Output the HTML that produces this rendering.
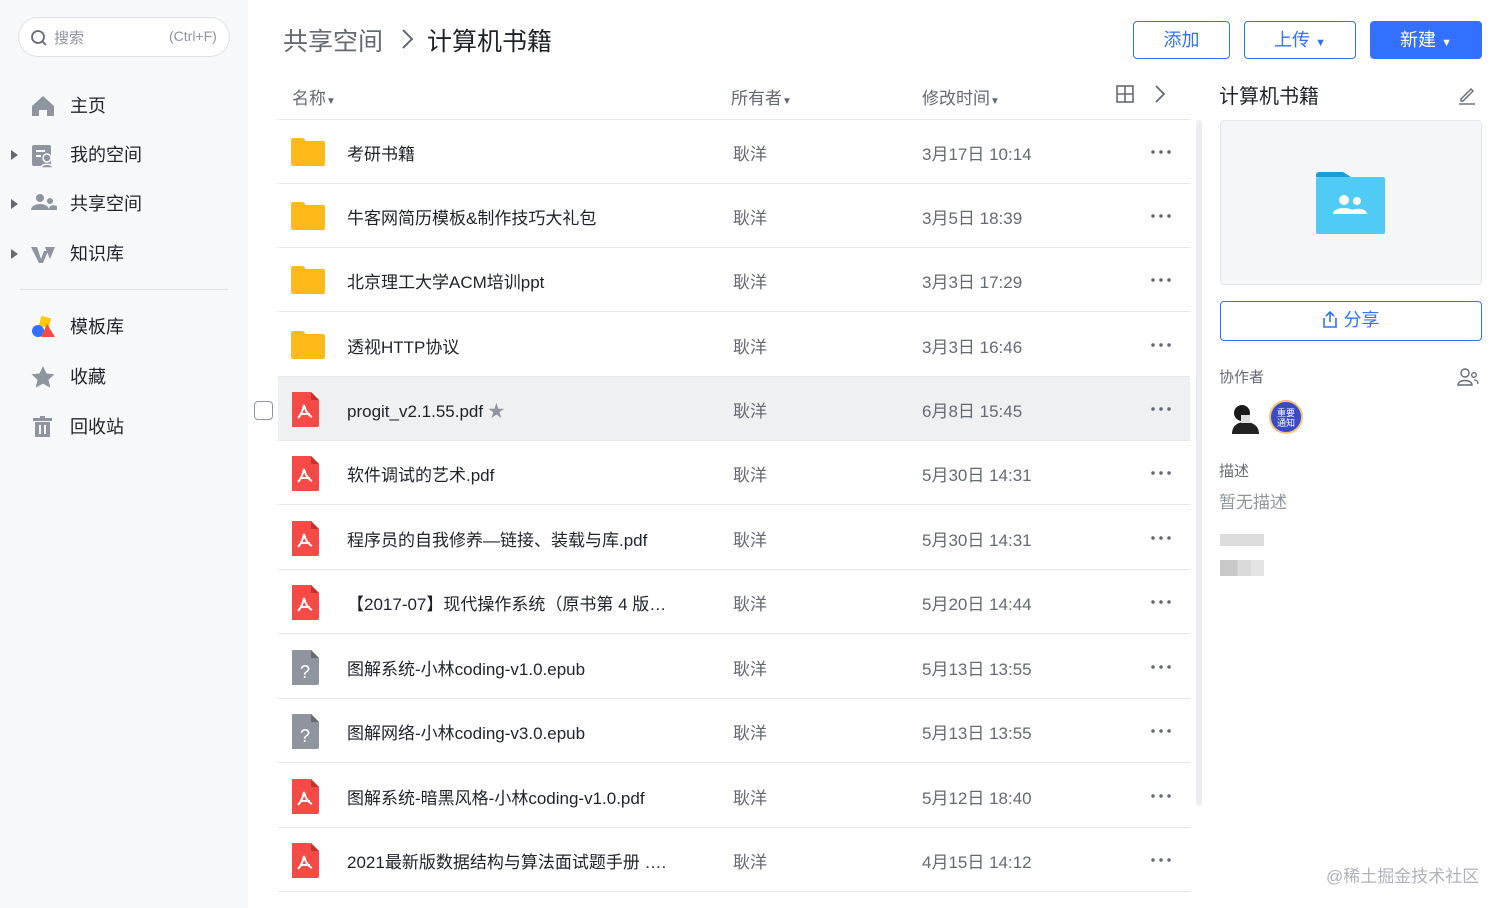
<!DOCTYPE html>
<html><head><meta charset="utf-8"><style>
*{margin:0;padding:0;box-sizing:border-box}
body{width:1512px;height:908px;overflow:hidden;background:#fff;font-family:"Liberation Sans","Noto Sans CJK SC",sans-serif;color:#1f2329;position:relative}
.abs{position:absolute}
.side{left:0;top:0;width:248px;height:908px;background:#f7f8fa}
.search{left:18px;top:17px;width:212px;height:40px;border:1px solid #dee0e3;border-radius:20px;background:#fff;font-size:15px;color:#8f959e}
.nav{left:0;width:248px;height:30px;font-size:18px;color:#1f2329;line-height:30px}
.nav .t{position:absolute;left:70px}
.nav .ar{position:absolute;left:11px;top:10px;width:0;height:0;border-left:7px solid #646a73;border-top:5px solid transparent;border-bottom:5px solid transparent}
.ic{position:absolute;left:31px;top:4px}
.row{left:278px;width:912px;height:64px;border-bottom:1px solid #e5e6eb;font-size:17px;color:#1f2329}
.row .n{position:absolute;left:69px;top:20px;white-space:nowrap}
.row .o{position:absolute;left:455px;top:20px;color:#646a73}
.row .d{position:absolute;left:644px;top:20px;color:#646a73}
.row .m{position:absolute;left:871px;top:30px;width:22px;height:4px;background:radial-gradient(circle,#646a73 1.6px,transparent 2px) 0 0/8px 4px repeat-x}
.row .fi{position:absolute;left:13px;top:18px}
.hd{font-size:17px;color:#646a73;top:84px}
.btn{height:38px;top:21px;border:1px solid #3370ff;border-radius:4px;color:#3370ff;font-size:18px;text-align:center;line-height:36px}
</style></head><body>
<div class="abs side"></div>
<div class="abs search"><svg class="abs" style="left:11px;top:11px" width="18" height="18" viewBox="0 0 18 18"><circle cx="8" cy="8" r="6" fill="none" stroke="#646a73" stroke-width="1.8"/><path d="M12.5 12.5L16 16" stroke="#646a73" stroke-width="1.8"/></svg><span class="abs" style="left:35px;top:9px">搜索</span><span class="abs" style="left:150px;top:10px;font-size:14px">(Ctrl+F)</span></div>

<div class="abs nav" style="top:91px"><svg class="ic" width="24" height="22" viewBox="0 0 24 22"><path d="M12 1L1 11v10h7v-6h8v6h7V11z" fill="#8f959e"/></svg><span class="t">主页</span></div>
<div class="abs nav" style="top:140px"><span class="ar"></span><svg class="ic" width="24" height="24" viewBox="0 0 24 24"><rect x="1" y="1" width="19" height="21" rx="2" fill="#8f959e"/><path d="M5 7h9M5 12h5" stroke="#fff" stroke-width="2"/><circle cx="16" cy="14" r="4" fill="#8f959e" stroke="#f7f8fa" stroke-width="1.5"/><path d="M10 24c0-5 12-5 12 0z" fill="#8f959e" stroke="#f7f8fa" stroke-width="1.5"/></svg><span class="t">我的空间</span></div>
<div class="abs nav" style="top:189px"><span class="ar"></span><svg class="ic" width="26" height="20" viewBox="0 0 26 20"><circle cx="9" cy="5" r="4" fill="#8f959e"/><path d="M0 17c0-8 18-8 18 0z" fill="#8f959e"/><circle cx="19" cy="8" r="3" fill="#8f959e"/><path d="M18 17c0-4 2-6 8-4v4z" fill="#8f959e"/></svg><span class="t">共享空间</span></div>
<div class="abs nav" style="top:239px"><span class="ar"></span><svg class="ic" width="24" height="18" viewBox="0 0 24 18" style="top:7px"><path d="M0 1h6l4 12 3-8h4l-5 12H8zM14 1h10l-5 12z" fill="#8f959e"/></svg><span class="t">知识库</span></div>
<div class="abs" style="left:20px;top:289px;width:208px;height:1px;background:#dee0e3"></div>
<div class="abs nav" style="top:312px"><svg class="ic" width="24" height="22" viewBox="0 0 24 22"><rect x="9" y="1" width="10" height="10" fill="#ffc60a" transform="rotate(15 14 6)"/><circle cx="7" cy="15" r="6" fill="#3370ff"/><path d="M16 8l8 13h-14z" fill="#f54a45"/></svg><span class="t">模板库</span></div>
<div class="abs nav" style="top:362px"><svg class="ic" width="24" height="22" viewBox="0 0 24 22"><path d="M12 0l3.5 7.5 8 .8-6 5.5 1.8 8L12 17.6 4.7 21.8l1.8-8-6-5.5 8-.8z" fill="#8f959e"/></svg><span class="t">收藏</span></div>
<div class="abs nav" style="top:412px"><svg class="ic" width="24" height="22" viewBox="0 0 24 22"><rect x="2" y="2" width="19" height="3" fill="#8f959e"/><rect x="9" y="0" width="5" height="3" fill="#8f959e"/><path d="M4 6h15v15H4z" fill="#8f959e"/><path d="M9 9v9M14 9v9" stroke="#f7f8fa" stroke-width="2"/></svg><span class="t">回收站</span></div>

<div class="abs" style="left:283px;top:22px;font-size:25px;color:#646a73">共享空间</div>
<svg class="abs" style="left:400px;top:28px" width="14" height="22" viewBox="0 0 14 22"><path d="M3 2l9 9-9 9" fill="none" stroke="#646a73" stroke-width="2"/></svg>
<div class="abs" style="left:427px;top:22px;font-size:25px;color:#1f2329">计算机书籍</div>

<div class="abs btn" style="left:1133px;width:97px">添加</div>
<div class="abs btn" style="left:1244px;width:112px">上传 <span style="font-size:11px">▼</span></div>
<div class="abs btn" style="left:1370px;width:112px;background:#3370ff;color:#fff">新建 <span style="font-size:11px">▼</span></div>

<div class="abs hd" style="left:292px">名称<span style="font-size:10px">▼</span></div>
<div class="abs hd" style="left:731px">所有者<span style="font-size:10px">▼</span></div>
<div class="abs hd" style="left:922px">修改时间<span style="font-size:10px">▼</span></div>
<svg class="abs" style="left:1116px;top:85px" width="18" height="18" viewBox="0 0 18 18"><rect x="1" y="1" width="16" height="16" fill="none" stroke="#646a73" stroke-width="1.6"/><path d="M9 1v16M1 9h16" stroke="#646a73" stroke-width="1.6"/></svg>
<svg class="abs" style="left:1154px;top:84px" width="12" height="20" viewBox="0 0 12 20"><path d="M2 2l8 8-8 8" fill="none" stroke="#646a73" stroke-width="1.8"/></svg>
<div class="abs" style="left:278px;top:119px;width:912px;height:1px;background:#e5e6eb"></div>
<div class="abs" style="left:1196px;top:120px;width:6px;height:686px;background:#eceef1;border-radius:3px"></div>

<div class="abs row" style="top:120px"><svg class="fi" width="34" height="28" viewBox="0 0 34 28"><path d="M0 2a2 2 0 012-2h10l3 3h17a2 2 0 012 2v21a2 2 0 01-2 2H2a2 2 0 01-2-2z" fill="#ffba1a"/></svg><span class="n">考研书籍</span><span class="o">耿洋</span><span class="d">3月17日 10:14</span><span class="m"></span></div>
<div class="abs row" style="top:184px"><svg class="fi" width="34" height="28" viewBox="0 0 34 28"><path d="M0 2a2 2 0 012-2h10l3 3h17a2 2 0 012 2v21a2 2 0 01-2 2H2a2 2 0 01-2-2z" fill="#ffba1a"/></svg><span class="n">牛客网简历模板&amp;制作技巧大礼包</span><span class="o">耿洋</span><span class="d">3月5日 18:39</span><span class="m"></span></div>
<div class="abs row" style="top:248px"><svg class="fi" width="34" height="28" viewBox="0 0 34 28"><path d="M0 2a2 2 0 012-2h10l3 3h17a2 2 0 012 2v21a2 2 0 01-2 2H2a2 2 0 01-2-2z" fill="#ffba1a"/></svg><span class="n">北京理工大学ACM培训ppt</span><span class="o">耿洋</span><span class="d">3月3日 17:29</span><span class="m"></span></div>
<div class="abs row" style="top:313px"><svg class="fi" width="34" height="28" viewBox="0 0 34 28"><path d="M0 2a2 2 0 012-2h10l3 3h17a2 2 0 012 2v21a2 2 0 01-2 2H2a2 2 0 01-2-2z" fill="#ffba1a"/></svg><span class="n">透视HTTP协议</span><span class="o">耿洋</span><span class="d">3月3日 16:46</span><span class="m"></span></div>
<div class="abs" style="left:254px;top:401px;width:19px;height:19px;border:1.5px solid #8f959e;border-radius:4px"></div>
<div class="abs row" style="top:377px;background:#eff0f1"><svg class="fi" width="28" height="35" viewBox="0 0 28 35" style="top:15px"><path d="M1 0h19l8 8v25a2 2 0 01-2 2H1z" fill="#f54a45"/><path d="M20 0v8h8z" fill="#c7302b"/><path d="M7 26c3-3 5-8 6-13 1 5 4 10 8 12M9 22h10" fill="none" stroke="#fff" stroke-width="2"/></svg><span class="n">progit_v2.1.55.pdf <span style="color:#8f959e">★</span></span><span class="o">耿洋</span><span class="d">6月8日 15:45</span><span class="m"></span></div>
<div class="abs row" style="top:441px"><svg class="fi" width="28" height="35" viewBox="0 0 28 35" style="top:15px"><path d="M1 0h19l8 8v25a2 2 0 01-2 2H1z" fill="#f54a45"/><path d="M20 0v8h8z" fill="#c7302b"/><path d="M7 26c3-3 5-8 6-13 1 5 4 10 8 12M9 22h10" fill="none" stroke="#fff" stroke-width="2"/></svg><span class="n">软件调试的艺术.pdf</span><span class="o">耿洋</span><span class="d">5月30日 14:31</span><span class="m"></span></div>
<div class="abs row" style="top:506px"><svg class="fi" width="28" height="35" viewBox="0 0 28 35" style="top:15px"><path d="M1 0h19l8 8v25a2 2 0 01-2 2H1z" fill="#f54a45"/><path d="M20 0v8h8z" fill="#c7302b"/><path d="M7 26c3-3 5-8 6-13 1 5 4 10 8 12M9 22h10" fill="none" stroke="#fff" stroke-width="2"/></svg><span class="n">程序员的自我修养—链接、装载与库.pdf</span><span class="o">耿洋</span><span class="d">5月30日 14:31</span><span class="m"></span></div>
<div class="abs row" style="top:570px"><svg class="fi" width="28" height="35" viewBox="0 0 28 35" style="top:15px"><path d="M1 0h19l8 8v25a2 2 0 01-2 2H1z" fill="#f54a45"/><path d="M20 0v8h8z" fill="#c7302b"/><path d="M7 26c3-3 5-8 6-13 1 5 4 10 8 12M9 22h10" fill="none" stroke="#fff" stroke-width="2"/></svg><span class="n">【2017-07】现代操作系统（原书第 4 版…</span><span class="o">耿洋</span><span class="d">5月20日 14:44</span><span class="m"></span></div>
<div class="abs row" style="top:635px"><svg class="fi" width="28" height="35" viewBox="0 0 28 35" style="top:15px"><path d="M1 0h19l8 8v25a2 2 0 01-2 2H1z" fill="#8f959e"/><path d="M20 0v8h8z" fill="#646a73"/><text x="14" y="28" font-size="18" fill="#fff" text-anchor="middle" font-family="Liberation Sans">?</text></svg><span class="n">图解系统-小林coding-v1.0.epub</span><span class="o">耿洋</span><span class="d">5月13日 13:55</span><span class="m"></span></div>
<div class="abs row" style="top:699px"><svg class="fi" width="28" height="35" viewBox="0 0 28 35" style="top:15px"><path d="M1 0h19l8 8v25a2 2 0 01-2 2H1z" fill="#8f959e"/><path d="M20 0v8h8z" fill="#646a73"/><text x="14" y="28" font-size="18" fill="#fff" text-anchor="middle" font-family="Liberation Sans">?</text></svg><span class="n">图解网络-小林coding-v3.0.epub</span><span class="o">耿洋</span><span class="d">5月13日 13:55</span><span class="m"></span></div>
<div class="abs row" style="top:764px"><svg class="fi" width="28" height="35" viewBox="0 0 28 35" style="top:15px"><path d="M1 0h19l8 8v25a2 2 0 01-2 2H1z" fill="#f54a45"/><path d="M20 0v8h8z" fill="#c7302b"/><path d="M7 26c3-3 5-8 6-13 1 5 4 10 8 12M9 22h10" fill="none" stroke="#fff" stroke-width="2"/></svg><span class="n">图解系统-暗黑风格-小林coding-v1.0.pdf</span><span class="o">耿洋</span><span class="d">5月12日 18:40</span><span class="m"></span></div>
<div class="abs row" style="top:828px"><svg class="fi" width="28" height="35" viewBox="0 0 28 35" style="top:15px"><path d="M1 0h19l8 8v25a2 2 0 01-2 2H1z" fill="#f54a45"/><path d="M20 0v8h8z" fill="#c7302b"/><path d="M7 26c3-3 5-8 6-13 1 5 4 10 8 12M9 22h10" fill="none" stroke="#fff" stroke-width="2"/></svg><span class="n">2021最新版数据结构与算法面试题手册 ….</span><span class="o">耿洋</span><span class="d">4月15日 14:12</span><span class="m"></span></div>

<div class="abs" style="left:1219px;top:80px;font-size:20px;color:#1f2329">计算机书籍</div>
<svg class="abs" style="left:1457px;top:85px" width="20" height="20" viewBox="0 0 20 20"><path d="M4 14l10-10 2 2-10 10H4z" fill="none" stroke="#646a73" stroke-width="1.4"/><path d="M2 19h16" stroke="#646a73" stroke-width="1.4"/></svg>
<div class="abs" style="left:1220px;top:120px;width:262px;height:165px;background:#f5f6f7;border:1px solid #e5e6eb;border-radius:4px"></div>
<svg class="abs" style="left:1316px;top:172px" width="70" height="62" viewBox="0 0 70 62"><path d="M0 3a3 3 0 013-3h24l8 5H0z" fill="#1a9fd4"/><rect x="0" y="5" width="69" height="57" rx="2" fill="#50cbf5"/><circle cx="28" cy="28" r="5" fill="#fff"/><path d="M17 42c0-8 22-8 22 0z" fill="#fff"/><circle cx="41" cy="29" r="4" fill="#fff"/><path d="M33 42c0-7 18-7 18 0z" fill="#fff"/></svg>
<div class="abs" style="left:1220px;top:301px;width:262px;height:40px;border:1.5px solid #3370ff;border-radius:4px;color:#3370ff;font-size:18px;text-align:center;line-height:37px"><svg width="16" height="17" viewBox="0 0 16 17" style="vertical-align:-2px"><path d="M8 11V1M4 5l4-4 4 4M2 7v9h12V7" fill="none" stroke="#3370ff" stroke-width="1.6"/></svg> 分享</div>
<div class="abs" style="left:1219px;top:366px;font-size:15px;color:#646a73">协作者</div>
<svg class="abs" style="left:1457px;top:367px" width="22" height="20" viewBox="0 0 22 20"><circle cx="8" cy="6" r="4" fill="none" stroke="#646a73" stroke-width="1.4"/><path d="M1 18c0-6 14-6 14 0z" fill="none" stroke="#646a73" stroke-width="1.4"/><circle cx="17" cy="8" r="2.3" fill="none" stroke="#646a73" stroke-width="1.3"/><path d="M17 13c3 0 4 2 4 4" fill="none" stroke="#646a73" stroke-width="1.3"/></svg>
<svg class="abs" style="left:1228px;top:400px" width="34" height="34" viewBox="0 0 34 34"><circle cx="17" cy="17" r="16" fill="#fff"/><path d="M4 34c0-10 8-12 13-12s14 2 14 12z" fill="#222"/><circle cx="14" cy="13" r="8" fill="#1a1a1a"/><rect x="13" y="15" width="9" height="8" fill="#ddd"/></svg>
<div class="abs" style="left:1269px;top:400px;width:34px;height:34px;border-radius:50%;background:#3b4bc8;border:2px solid #f2c37a;color:#fff;font-size:9px;line-height:10px;text-align:center;padding-top:6px">重要<br>通知</div>
<div class="abs" style="left:1219px;top:460px;font-size:15px;color:#646a73">描述</div>
<div class="abs" style="left:1219px;top:488px;font-size:17px;color:#8f959e">暂无描述</div>
<div class="abs" style="left:1220px;top:534px;width:44px;height:12px;background:#dcdcdc"></div>
<div class="abs" style="left:1220px;top:560px;width:44px;height:16px;background:linear-gradient(90deg,#c8c8c8 0 40%,#dadada 40% 70%,#e4e4e4 70%)"></div>
<div class="abs" style="left:1326px;top:862px;font-size:17px;color:#b0b3b8">@稀土掘金技术社区</div>
</body></html>
